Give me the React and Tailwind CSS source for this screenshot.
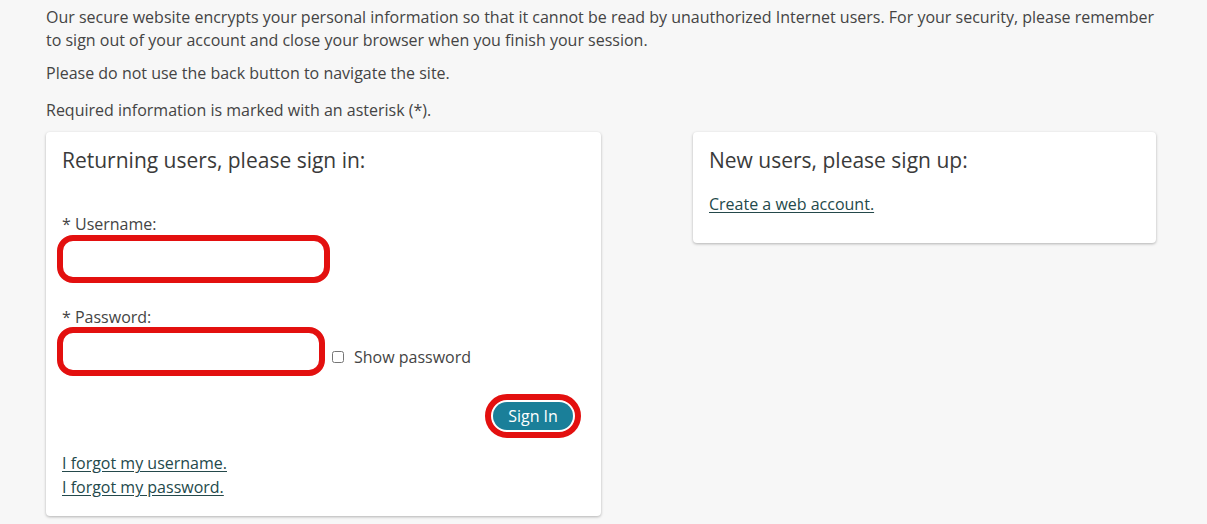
import React, { useState } from 'react';

export default function App() {
  const [showPassword, setShowPassword] = useState(false);

  return (
    <div className="min-h-screen bg-[#f7f7f7] pl-[46px] pt-[6px] text-[16px] text-[#444] font-['Open_Sans',sans-serif]">
      <div className="w-[1110px]">
        <p className="leading-[23px]">
          Our secure website encrypts your personal information so that it cannot be read by unauthorized Internet users. For your security, please remember to sign out of your account and close your browser when you finish your session.
        </p>
        <p className="mt-[10px] leading-[23px]">Please do not use the back button to navigate the site.</p>
        <p className="mt-[14px] leading-[23px]">Required information is marked with an asterisk (*).</p>

        <div className="mt-[10px] flex items-start gap-[92px]">
          {/* Sign in card */}
          <div className="w-[555px] bg-white rounded-[4px] shadow-[0_1px_3px_rgba(0,0,0,0.28)] px-4 pt-4 pb-[17px]">
            <h2 className="text-[21px] leading-[24px] text-[#3a3a3a]">Returning users, please sign in:</h2>

            <label className="block mt-[41px] leading-[22px]">* Username:</label>
            <input
              type="text"
              className="-ml-[5px] block w-[273px] h-[48px] bg-white border-[6px] border-[#e3100f] rounded-[16px] outline-none px-3"
            />

            <label className="block mt-[23px] leading-[22px]">* Password:</label>
            <div className="-ml-[5px] -mt-[1px] flex items-center">
              <input
                type={showPassword ? 'text' : 'password'}
                className="block w-[268px] h-[49px] bg-white border-[6px] border-[#e3100f] rounded-[16px] outline-none px-3"
              />
              <input
                type="checkbox"
                checked={showPassword}
                onChange={() => setShowPassword(!showPassword)}
                className="ml-[7px] w-[12px] h-[12px] mt-[10px]"
              />
              <span className="ml-[10px] mt-[10px] leading-[22px]">Show password</span>
            </div>

            <div className="mt-[18px] flex justify-end pr-[4px]">
              <div className="border-[6px] border-[#e3100f] rounded-full p-[2px] bg-white">
                <button className="w-[80px] h-[28px] rounded-[14px] bg-[#1a7f99] text-white text-[16px] leading-[28px]">
                  Sign In
                </button>
              </div>
            </div>

            <div className="mt-[13px] flex flex-col items-start leading-[24px]">
              <a href="#" className="underline underline-offset-2 text-[#24494b]">I forgot my username.</a>
              <a href="#" className="underline underline-offset-2 text-[#24494b]">I forgot my password.</a>
            </div>
          </div>

          {/* Sign up card */}
          <div className="w-[463px] bg-white rounded-[4px] shadow-[0_1px_3px_rgba(0,0,0,0.28)] px-4 pt-4 pb-[27px]">
            <h2 className="text-[21px] leading-[24px] text-[#3a3a3a]">New users, please sign up:</h2>
            <a href="#" className="inline-block mt-[20px] leading-[24px] underline underline-offset-2 text-[#24494b]">
              Create a web account.
            </a>
          </div>
        </div>
      </div>
    </div>
  );
}
